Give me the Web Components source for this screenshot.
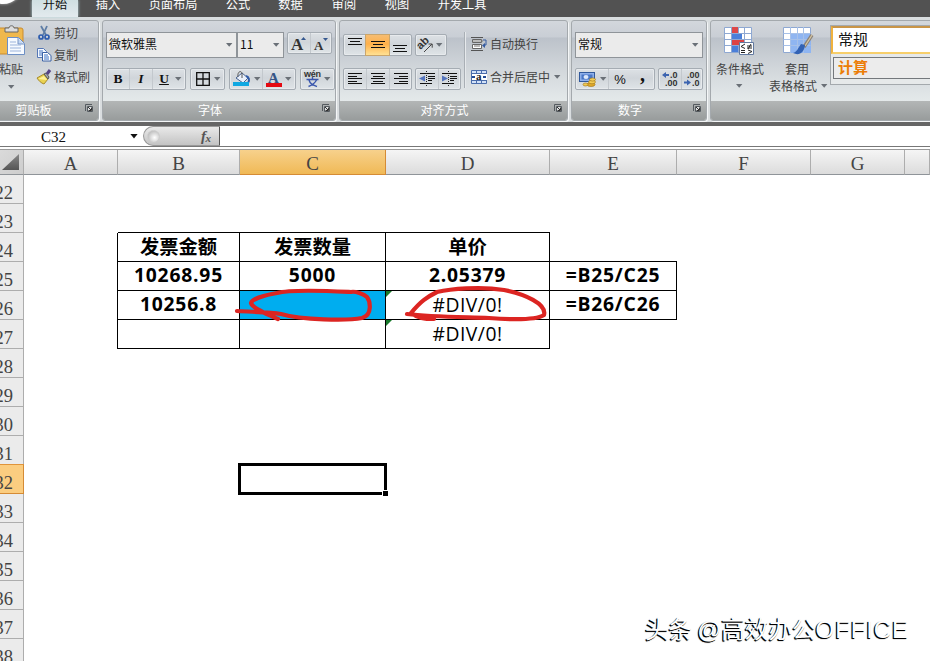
<!DOCTYPE html>
<html lang="zh-CN"><head><meta charset="utf-8"><title>Excel</title>
<style>
html,body{margin:0;width:930px;height:661px;overflow:hidden;background:#fff}
body{font-family:"Noto Sans CJK SC",sans-serif}
</style></head><body>
<excel-app></excel-app>
<script>
const def=(name,html,after)=>{
  const t=document.createElement('template');t.innerHTML=html;
  customElements.define(name,class extends HTMLElement{
    connectedCallback(){
      if(this.shadowRoot)return;
      this.attachShadow({mode:'open'}).appendChild(t.content.cloneNode(true));
      if(after)after(this,this.shadowRoot);
    }
  });
};
const lines=(a)=>a.map(([x,y,l])=>`<path d="M${x} ${y}.5h${l}" stroke="#111" stroke-width="1.2"/>`).join('');
const ICONS={
 down:[7,4,'<path d="M0 0h6.400L3.200 3.800z" fill="#6a7077"/>'],
 cut:[16,16,'<path d="M5 1l5 9M11 1L7 10" stroke="#5f7ea6" stroke-width="1.8" fill="none"/><circle cx="5" cy="12" r="2" fill="none" stroke="#2d5cae" stroke-width="1.7"/><circle cx="11" cy="12" r="2" fill="none" stroke="#2d5cae" stroke-width="1.7"/>'],
 copy:[16,16,'<path d="M1.500 1.500h6l3 3v6h-9z" fill="#f3f8ff" stroke="#5577b5"/><path d="M3 4h4M3 6h5M3 8h4" stroke="#4676c2"/><path d="M6.500 5.500h5l3.500 3v5.500h-8.500z" fill="#fff" stroke="#3961a5"/><path d="M8 8h4M8 10h5M8 12h5" stroke="#3870c5"/>'],
 brush:[16,16,'<path d="M1 9l7-4 4 5-4 5c-3-1-5-3-7-6z" fill="#e9d251" stroke="#a88c2d"/><path d="M2 10l6-3 3 4" fill="#fff29a"/><path d="M8 5l2-1 3 4-1 2z" fill="#a9acb2" stroke="#555"/><path d="M11 5l3-4" stroke="#554486" stroke-width="3"/>'],
 paste:[26,32,'<rect x="-6" y="3" width="29" height="26" rx="2" fill="#efb84d" stroke="#c98c30"/><path d="M5 6V3h4c0-3 5-3 5 0h4v4H5z" fill="#ddd" stroke="#666"/><path d="M7.500 12.500h11l6 6v11h-17z" fill="#f6faff" stroke="#6d8fc4"/><path d="M18 13v6h6" fill="#c3d7f4" stroke="#7694c4"/><path d="M10 17h6M10 20h11M10 23h11M10 26h11" stroke="#9bb3db"/>'],
 grow:[16,17,'<text x="0" y="15" font-family="Liberation Serif" font-size="17" font-weight="bold" fill="#333">A</text><path d="M10 5l2.500-3L15 5z" fill="#35588f"/>'],
 shrink:[16,17,'<text x="1" y="15" font-family="Liberation Serif" font-size="13" font-weight="bold" fill="#333">A</text><path d="M10 3h5l-2.500 3z" fill="#35588f"/>'],
 border:[14,14,'<path d="M.7.700h12.600v12.600H.7zM7 0v14M0 7h14" fill="none" stroke="#111" stroke-width="1.300"/>'],
 fill:[17,16,'<path d="M3 7l6-5 6 5-5 5z" fill="#e9f0fb" stroke="#466393"/><path d="M5 6c-1-6 4-7 4-3v4" fill="none" stroke="#555"/><path d="M13 5c3 1 4 4 2 7" fill="none" stroke="#315ca9" stroke-width="2"/><path d="M0 11h16v4H0z" fill="#11a8e2"/>'],
 color:[16,17,'<text x="2" y="11.500" font-family="Liberation Serif" font-size="15" font-weight="bold" fill="#345486">A</text><path d="M0 12h16v4H0z" fill="#e40a12"/>'],
 wen:[18,18,'<text x="0" y="7" font-family="Liberation Sans" font-size="9" font-weight="bold" fill="#333" textLength="17">wén</text><path d="M2.500 9.500h12M8.500 7v2.500M12.500 10c-2 4-4 5-8 6.500M5 10c1 4 4 5 8 6.500" fill="none" stroke="#3a56ad" stroke-width="1.400"/>'],
 vtop:[16,16,lines([[1,1,14],[3,4,10],[1,7,14]])],
 vmid:[16,16,lines([[1,4,14],[3,7,10],[1,10,14]])],
 vbot:[16,16,lines([[1,8,14],[3,11,10],[1,14,14]])],
 left:[16,14,lines([[1,1,14],[1,4,9],[1,6,14],[1,9,9],[1,11,14]])],
 center:[16,14,lines([[1,1,14],[3,4,10],[1,6,14],[3,9,10],[1,11,14]])],
 right:[16,14,lines([[1,1,14],[6,4,9],[1,6,14],[6,9,9],[1,11,14]])],
 ab:[17,17,'<text transform="translate(4,13) rotate(-45)" font-family="Liberation Sans" font-size="11" font-weight="bold" fill="#333" x="-1" y="-1">ab</text><path d="M6 15l8-8M10.500 7h3.700v3.700" fill="none" stroke="#444"/>'],
 outdent:[17,16,lines([[1,2,15],[9,5,7],[9,7,7],[9,9,4],[1,12,12]])+'<path d="M7.500 0v15" stroke="#222" stroke-dasharray="1 1"/><path d="M6 4.500v6L0 7.500z" fill="#5474bd"/>'],
 indent:[17,16,lines([[1,2,15],[9,5,7],[9,7,7],[9,9,4],[1,12,12]])+'<path d="M7.500 0v15" stroke="#222" stroke-dasharray="1 1"/><path d="M1 4.500v6l6-3z" fill="#5474bd"/>'],
 wrap:[17,16,'<path d="M0 1.500h12M0 14.500h12" stroke="#555"/><path d="M1.500 3.500h9v3h-9zM1.500 8.500h9v4h-9z" fill="#fff" stroke="#666"/><path d="M2 5h10M3 10h6" stroke="#777"/><path d="M12 4h3v5h-2" fill="none" stroke="#345aa0"/><path d="M14 7v5l-3-2.500z" fill="#345aa0"/>'],
 merge:[17,16,'<path d="M.5 1.500h15v13H.5z" fill="#d3e2f8" stroke="#4a6dab"/><path d="M1 4.500h15M1 11.500h15M5.500 1v3M10.500 1v3M5.500 12v3M10.500 12v3" stroke="#4a6dab"/><path d="M1 5h15v6H1z" fill="#fff"/><text x="5" y="10.500" font-family="Liberation Serif" font-size="11" font-weight="bold" fill="#222">a</text><path d="M1 8h3M12 8h3" stroke="#224b94" stroke-width="1.800"/>'],
 money:[17,16,'<rect x=".5" y="1.500" width="15" height="9" fill="#8fb0ea" stroke="#31599b"/><rect x="2.500" y="3.500" width="11" height="5" fill="#4a77c6"/><ellipse cx="7" cy="6" rx="2.500" ry="2" fill="#dce8fb"/><ellipse cx="12" cy="13.500" rx="4" ry="2" fill="#e0a92a" stroke="#9a7117" stroke-width=".6"/><ellipse cx="13" cy="11" rx="3.500" ry="1.800" fill="#f3cc54" stroke="#9a7117" stroke-width=".6"/><ellipse cx="13.500" cy="8.500" rx="3" ry="1.600" fill="#f3cc54" stroke="#9a7117" stroke-width=".6"/><ellipse cx="6.500" cy="13.500" rx="2.500" ry="1.500" fill="#f2c94c" stroke="#9a7117" stroke-width=".6"/>'],
 inc:[18,16,'<path d="M1 4l4-3v2h3v2H5v2z" fill="#3c64b0"/><text x="9" y="7" font-family="Liberation Sans" font-size="9" font-weight="bold" fill="#333">.0</text><text x="4" y="15" font-family="Liberation Sans" font-size="9" font-weight="bold" fill="#333">.00</text>'],
 dec:[18,16,'<path d="M8 11.500l-4-3v2H1v2h3v2z" fill="#3c64b0"/><text x="4" y="7" font-family="Liberation Sans" font-size="9" font-weight="bold" fill="#333">.00</text><text x="9" y="15" font-family="Liberation Sans" font-size="9" font-weight="bold" fill="#333">.0</text>'],
 cond:[31,31,'<path d="M.5 1.500h27v25H.5z" fill="#fff" stroke="#8ea8d2"/><path d="M.5 7.500h27M.5 13.500h27M.5 19.500h27M7.500 1v26M14.500 1v26M20.500 1v26" stroke="#8ea8d2"/><path d="M8 1h6v6H8z" fill="#dd4848"/><path d="M8 8h10v5H8z" fill="#4b7fd9"/><path d="M8 14h12v5H8z" fill="#dd4343"/><path d="M8 20h6v6H8z" fill="#4b7fd9"/><path d="M15.500 16.500h14v12h-14z" fill="#fff" stroke="#62799f"/><path d="M21 18l-4 2.500 4 2M17 24.500h4M17 26.500h4M23 20h5M23 22h5M27 18l-3 5M24 24l4 1.500-4 2" fill="none" stroke="#222"/>'],
 tfmt:[31,31,'<path d="M.5 1.500h27v25H.5z" fill="#fff" stroke="#8ea8d2"/><path d="M7 8h21v19H7z" fill="#8fb5f1"/><path d="M.5 7.500h27M.5 13.500h27M.5 19.500h27M7.500 1v26M14.500 1v26M20.500 1v26" stroke="#a6c0e8"/><path d="M29 9l-8 12" stroke="#8c8378" stroke-width="3.500"/><path d="M29 9l-7 11" stroke="#d8c8a4" stroke-width="1.200"/><path d="M22 19l-4-1c-3 4-4 8-8 9 6 3 11 0 12-8z" fill="#3262b4"/>'],
 launch:[9,9,'<path d="M.5 7V.500H7" fill="none" stroke="#555b60"/><path d="M2.500 7.500h5v-5h-5z" fill="#dfe1e2" stroke="#555b60"/><path d="M3 3l3 3M6.500 3.500v3h-3" fill="none" stroke="#333"/>'],
 fx:[18,17,'<text x="3" y="12.500" font-family="Liberation Serif" font-size="15" font-style="italic" font-weight="bold" fill="#555">f</text><text x="7.500" y="13.500" font-family="Liberation Serif" font-size="11" font-style="italic" font-weight="bold" fill="#555">x</text>'],
};
def('x-icon','<style>:host{display:block;flex:none}span,svg{display:block;overflow:visible}</style><span></span>',(h,r)=>{
  const [w,hh,s]=ICONS[h.getAttribute('name')];
  r.querySelector('span').innerHTML=`<svg width="${w}" height="${hh}" viewBox="0 0 ${w} ${hh}">${s}</svg>`;
});
def('ribbon-tab',`<style>:host{display:block;flex:none;box-sizing:border-box;height:17px;color:#fff;font-size:12.2px;line-height:18px;white-space:nowrap;text-align:center}
span{display:block;margin-top:-5px}
:host([active]){color:#111;background:linear-gradient(#cfdfe1,#e3eaee);box-shadow:0 0 3px #b5d6d9}</style><span><slot></slot></span>`);
def('ribbon-group',`<style>:host{display:flex;flex-direction:column;flex:none;box-sizing:border-box;height:101px;border:1px solid #a4a9ad;border-radius:3px;box-shadow:1px 1px 0 #f4f6f7;overflow:hidden;
background:linear-gradient(#d3d7dc 0,#c9ced5 16px,#bcc2ca 17px,#d3d8dc 50px,#e4e9ea 80px)}
.body{height:80px;display:flex;flex:none}
.cap{height:19px;display:flex;align-items:center;background:linear-gradient(#b3b6b6,#989c9c);color:#fff;font-size:12px;line-height:17px}
.cap span{flex:1;text-align:center;margin-top:-2px}
x-icon{margin:-5px 4px 0 5px}
:host([plain]) x-icon{display:none}</style><div class="body"><slot></slot></div><div class="cap"><span></span><x-icon name="launch"></x-icon></div>`,
(h,r)=>{r.querySelector('span').textContent=h.getAttribute('caption')||'';});
def('btn-set',`<style>:host{display:flex;flex:none;box-sizing:border-box;height:22px;border:1px solid #a5acb3;border-radius:2px;background:linear-gradient(#dde1e5,#d0d5da 45%,#dfe4e7);box-shadow:inset 0 0 0 1px #e7eaed;align-items:stretch}</style><slot></slot>`);
def('tool-btn',`<style>:host{display:flex;flex:none;align-items:center;justify-content:center;box-sizing:border-box;color:#111;font:bold 13.5px "Liberation Serif",serif}
:host([on]){background:linear-gradient(#f6bd72,#ffb04a 45%,#ffe193);box-shadow:0 0 0 1px #c9a56c}:host([sep]){border-left:1px solid #c3c8cd}</style><slot></slot>`);
def('combo-box',`<style>:host{display:flex;flex:none;box-sizing:border-box;height:26px;border:1px solid #8f9499;background:#ebebeb;align-items:center;padding:0 3px 0 2px;font-size:12px;line-height:18px;color:#111}
span{flex:1;margin-top:-2px;white-space:nowrap}</style><span><slot></slot></span><x-icon name="down"></x-icon>`);
def('ribbon-bar',`<style>
:host{display:block;height:126px;background:#525252;color:#444;font-size:12px;line-height:18px}
.tabs{display:flex;height:17px;position:relative}
.orb{width:32px;flex:none;overflow:hidden;height:17px}
.orb i{display:block;width:40px;height:40px;border-radius:50%;margin:-36px 0 0 -17px;background:#fff;box-shadow:0 0 3px #bbb}
.groups{display:flex;height:105px;background:#d9dddf;padding-top:3px;box-sizing:border-box;border-bottom:1px solid #d9dddf}
.edge{height:4px;background:#666}
.col{display:flex;flex-direction:column}.row{display:flex}.row>*{flex:none}
.lbl{white-space:nowrap;margin-top:-1px;margin-bottom:1px}
.it{display:flex;height:22px;align-items:center;gap:2px}
.sep{width:1px;height:56px;background:#a9afb5;border-right:1px solid #e6e9ec}
.gal{border:1px solid #a4a9ad;box-sizing:border-box;width:110px;height:60px;margin:4px 0 0;background:#e6e9ea;color:#111;font-size:15px}
.g1{height:28px;box-sizing:border-box;border:2px solid #f0b23e;border-color:#c99548 #f0b23e #f7cf6b;background:#fff;line-height:22px;padding-left:5px}
.g2{height:22px;box-sizing:border-box;border:1px solid #74787c;background:#ececec;line-height:17px;margin:3px 0 0 2px;padding-left:4px;color:#ec7d08;font-weight:bold}
</style>
<div class="tabs"><div class="orb"><i></i></div>
<ribbon-tab active style="width:46px">开始</ribbon-tab><ribbon-tab style="width:60px">插入</ribbon-tab><ribbon-tab style="width:70px">页面布局</ribbon-tab><ribbon-tab style="width:60px">公式</ribbon-tab><ribbon-tab style="width:45px">数据</ribbon-tab><ribbon-tab style="width:62px">审阅</ribbon-tab><ribbon-tab style="width:44px">视图</ribbon-tab><ribbon-tab style="width:86px">开发工具</ribbon-tab></div>
<div class="groups">
<ribbon-group caption="剪贴板" style="width:113px;margin-left:-14px;margin-right:3px">
 <div class="col" style="width:35px;margin:4px 0 0 13px"><x-icon name="paste" style="height:36px"></x-icon><span class="lbl" style="margin-left:-1px">粘贴</span><x-icon name="down" style="margin:6px 0 0 8px"></x-icon></div>
 <div class="col" style="margin:1px 0 0 1px"><div class="it"><x-icon name="cut"></x-icon>剪切</div><div class="it"><x-icon name="copy"></x-icon>复制</div><div class="it"><x-icon name="brush"></x-icon>格式刷</div></div>
</ribbon-group>
<ribbon-group caption="字体" style="width:234px;margin-right:3px"><div class="col" style="margin:11px 0 0 3px;gap:10px">
 <div class="row"><combo-box style="width:131px">微软雅黑</combo-box><combo-box style="width:47px">11</combo-box><btn-set style="width:45px;margin-left:3px"><tool-btn style="width:22px"><x-icon name="grow"></x-icon></tool-btn><tool-btn sep style="width:21px"><x-icon name="shrink"></x-icon></tool-btn></btn-set></div>
 <div class="row" style="gap:4px"><btn-set style="width:80px"><tool-btn style="width:22px">B</tool-btn><tool-btn sep style="width:23px;font-style:italic">I</tool-btn><tool-btn sep style="width:23px;text-decoration:underline">U</tool-btn><tool-btn><x-icon name="down"></x-icon></tool-btn></btn-set>
 <btn-set style="width:35px"><tool-btn style="width:23px"><x-icon name="border"></x-icon></tool-btn><tool-btn><x-icon name="down"></x-icon></tool-btn></btn-set>
 <btn-set style="width:67px"><tool-btn style="width:23px"><x-icon name="fill"></x-icon></tool-btn><tool-btn style="width:9px"><x-icon name="down"></x-icon></tool-btn><tool-btn sep style="width:23px"><x-icon name="color"></x-icon></tool-btn><tool-btn><x-icon name="down"></x-icon></tool-btn></btn-set>
 <btn-set style="width:35px"><tool-btn style="width:23px"><x-icon name="wen"></x-icon></tool-btn><tool-btn><x-icon name="down"></x-icon></tool-btn></btn-set></div></div>
</ribbon-group>
<ribbon-group caption="对齐方式" style="width:229px;margin-right:3px">
 <div class="col" style="margin:13px 0 0 3px;gap:12px;width:120px">
 <div class="row" style="gap:3px"><btn-set style="width:69px"><tool-btn style="width:22px"><x-icon name="vtop"></x-icon></tool-btn><tool-btn on style="width:23px"><x-icon name="vmid"></x-icon></tool-btn><tool-btn style="width:22px"><x-icon name="vbot"></x-icon></tool-btn></btn-set><btn-set style="width:32px"><tool-btn style="width:20px"><x-icon name="ab"></x-icon></tool-btn><tool-btn><x-icon name="down"></x-icon></tool-btn></btn-set></div>
 <div class="row" style="gap:3px"><btn-set style="width:69px"><tool-btn style="width:22px"><x-icon name="left"></x-icon></tool-btn><tool-btn sep style="width:23px"><x-icon name="center"></x-icon></tool-btn><tool-btn sep style="width:22px"><x-icon name="right"></x-icon></tool-btn></btn-set><btn-set style="width:46px"><tool-btn style="width:22px"><x-icon name="outdent"></x-icon></tool-btn><tool-btn sep style="width:22px"><x-icon name="indent"></x-icon></tool-btn></btn-set></div></div>
 <div class="sep" style="margin:11px 5px 0 1px"></div>
 <div class="col" style="margin-top:12px;gap:11px"><div class="it"><x-icon name="wrap"></x-icon>自动换行</div><div class="it"><x-icon name="merge"></x-icon>合并后居中<x-icon name="down" style="margin-left:2px"></x-icon></div></div>
</ribbon-group>
<ribbon-group caption="数字" style="width:136px;margin-right:3px"><div class="col" style="margin:11px 0 0 3px;gap:10px">
 <combo-box style="width:128px">常规</combo-box>
 <div class="row" style="gap:3px"><btn-set style="width:80px"><tool-btn style="width:23px"><x-icon name="money"></x-icon></tool-btn><tool-btn style="width:9px"><x-icon name="down"></x-icon></tool-btn><tool-btn sep style="width:23px;font:13px 'Liberation Sans'">%</tool-btn><tool-btn style="width:23px;font-size:20px;padding-bottom:10px">,</tool-btn></btn-set><btn-set style="width:45px"><tool-btn style="width:22px"><x-icon name="inc"></x-icon></tool-btn><tool-btn sep style="width:21px"><x-icon name="dec"></x-icon></tool-btn></btn-set></div></div>
</ribbon-group>
<ribbon-group plain style="width:240px">
 <div class="col" style="width:50px;margin:5px 0 0 5px"><x-icon name="cond" style="margin-left:8px;height:35px"></x-icon><span class="lbl">条件格式</span><x-icon name="down" style="margin:5px 0 0 20px"></x-icon></div>
 <div class="col" style="width:61px;margin:5px 0 0 3px"><x-icon name="tfmt" style="margin-left:14px;height:35px"></x-icon><span class="lbl" style="margin-left:16px">套用</span><div class="it" style="height:14px;gap:4px;white-space:nowrap">表格格式<x-icon name="down"></x-icon></div></div>
 <div class="gal"><div class="g1">常规</div><div class="g2">计算</div></div>
</ribbon-group>
</div><div class="edge"></div>`);
def('formula-bar',`<style>:host{display:flex;height:24px;box-sizing:border-box;background:#fff;border-bottom:1px solid #999}
.wrap{display:flex;width:930px;height:20px;border-bottom:1px solid #777;box-sizing:content-box;align-items:center}
.name{width:89px;padding-left:41px;font:15px/20px "Liberation Serif",serif;color:#111;flex:none;padding-top:2px;box-sizing:content-box}
.arr{width:8px;height:5px;background:#111;clip-path:polygon(0 0,100% 0,50% 100%);flex:none}
.fx{margin-left:5px;width:77px;height:20px;box-sizing:border-box;border:1px solid #999;border-right:1px solid #555;border-radius:10px 0 0 10px;background:linear-gradient(#e9e9e9,#c3c3c3);display:flex;align-items:center;justify-content:space-between;padding:0 1px 0 3px}
.fx x-icon{margin-right:2px}
.knob{width:11px;height:11px;border-radius:50%;background:radial-gradient(circle at 60% 60%,#fff,#aaa);border:1px solid #ccc}
</style><div class="wrap"><div class="name">C32</div><div class="arr"></div><div class="fx"><div class="knob"></div><x-icon name="fx"></x-icon></div></div>`);
def('sheet-cell',`<style>:host{display:flex;box-sizing:border-box;justify-content:center;align-items:center;border:0 solid #000;font:bold 19.3px/28px "Open Sans","Noto Sans CJK SC",sans-serif;color:#000;position:relative;white-space:nowrap;overflow:hidden}
:host([r]){border-right-width:1px}:host([b]){border-bottom-width:1px}:host([thin]){font-weight:400;letter-spacing:.5px}:host([num]){letter-spacing:.8px;padding-bottom:2px}
:host([blue]){background:#00adef}
:host([err])::before{content:"";position:absolute;left:0;top:0;border-top:6px solid #177a2b;border-right:6px solid transparent}
</style><slot></slot>`);
const W=[94,122,146,164,127,134,94,25],COLS='24px '+W.map(w=>w+'px').join(' ');
def('sheet-head',`<style>:host{display:flex;align-items:center;justify-content:center;box-sizing:border-box;color:#444;font:19px/1 "Liberation Serif",serif;padding-top:2px;border-right:1px solid #adadad;border-bottom:1px solid #8f9499;background:linear-gradient(#f5f5f5,#dcdcdc)}
:host([row]){background:#ebebeb;justify-content:flex-end;padding:9px 10px 0 0;border-color:#adadad;overflow:hidden;font-size:18.5px}
:host([on]){background:linear-gradient(#f7d18c,#f0b956);border-color:#d58b35}
:host([row][on]){background:#fbcd80;border-top:1px solid #e0943a;margin-top:-1px;padding-top:9px}
:host([corner]){background:linear-gradient(135deg,#dadada,#cdcdcd);align-items:flex-end;justify-content:flex-end;padding:0 4px 4px 0}
i{display:none;width:17px;height:16px;background:linear-gradient(#888,#555);clip-path:polygon(100% 0,100% 100%,0 100%)}
:host([corner]) i{display:block}</style><i></i><slot></slot>`);
const DATA={
 B23:['b'],C23:['b'],D23:['b'],
 A24:['r'],B24:['r b','发票金额'],C24:['r b','发票数量'],D24:['r b','单价'],E24:['b'],
 A25:['r'],B25:['r b num','10268.95'],C25:['r b num','5000'],D25:['r b num','2.05379'],E25:['r b num','=B25/C25'],
 A26:['r'],B26:['r b num','10256.8'],C26:['r b blue',''],D26:['r b thin err','#DIV/0!'],E26:['r b num','=B26/C26'],
 A27:['r'],B27:['r b'],C27:['r b'],D27:['r b thin err','#DIV/0!']
};
def('sheet-grid',`<style>:host{display:block;position:relative;height:511px;overflow:hidden}
.g{display:grid;grid-template-columns:${COLS};grid-template-rows:25px;grid-auto-rows:29px}
.sel,.ink,.mark{position:absolute}
.sel{left:238px;top:313px;width:143px;height:26px;border:3px solid #000}
.sel::after{content:"";position:absolute;right:-4px;bottom:-4px;width:5px;height:5px;background:#000;border:1px solid #fff;border-right-width:0;border-bottom-width:0}
.ink{left:0;top:0}
.mark{left:645px;top:463px;font:23.6px/34px "Liberation Sans","Noto Sans CJK SC",sans-serif;word-spacing:-1.500px;color:#fff;text-shadow:-1px 1px 0 #000,-1px 1px 1px #000;white-space:nowrap}
.mark span{font-size:24px;letter-spacing:.9px}
</style><div class="g"></div><div class="sel"></div>
<svg class="ink" width="930" height="511" fill="none" stroke="#dc2522" stroke-width="4.200" stroke-linecap="round" stroke-linejoin="round"><path d="M237 161C252 162 270 162 281 164C302 170 347 171 362 168C373 165 370 151 367 147C364 144 355 141 351 142C330 141 292 139 277 143C265 145 252 149 251 153C252 158 269 165 278 169"/><path d="M407 164C431 167 462 167 489 168C515 170 536 170 544 165C547 154 525 144 504 140C480 136 450 139 437 142C427 147 421 151 411 163C418 168 424 169 434 169"/></svg>
<div class="mark">头条 @高效办公<span>OFFICE</span></div>`,(h,r)=>{
 let s='<sheet-head corner></sheet-head>';
 [...'ABCDEFG',''].forEach(c=>s+=`<sheet-head${c==='C'?' on':''}>${c}</sheet-head>`);
 for(let n=22;n<=38;n++){
  s+=`<sheet-head row${n===32?' on':''}>${n}</sheet-head>`;
  for(const c of 'ABCDEFGH'){const d=DATA[c+n]||[''];s+=`<sheet-cell ${d[0]}>${d[1]||''}</sheet-cell>`;}
 }
 r.querySelector('.g').innerHTML=s;
});
def('excel-app',`<style>:host{display:flex;flex-direction:column;width:930px;height:661px;overflow:hidden;background:#fff}</style><ribbon-bar></ribbon-bar><formula-bar></formula-bar><sheet-grid></sheet-grid>`);
</script></body></html>
